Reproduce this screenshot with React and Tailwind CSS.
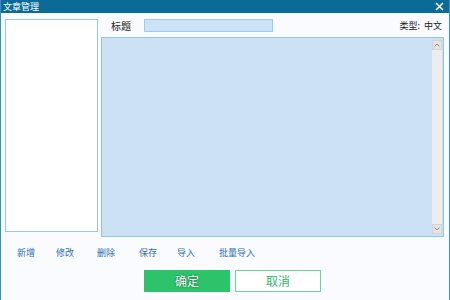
import React from 'react';

const links = [
  { label: '新增', x: 'w-[39px]' },
  { label: '修改', x: 'w-[41px]' },
  { label: '删除', x: 'w-[42px]' },
  { label: '保存', x: 'w-[38px]' },
  { label: '导入', x: 'w-[42px]' },
  { label: '批量导入', x: '' },
];

const App = () => {
  return (
    <div className="w-[450px] h-[300px] flex flex-col bg-[#f9fbfe] border-x border-[#3b8fbf] overflow-hidden" style={{ fontFamily: '"Noto Sans CJK SC", "Noto Sans", sans-serif' }}>
      {/* title bar */}
      <div className="h-[13px] bg-[#0b6b97] flex items-center justify-between pl-[3px] pr-[4px] shrink-0 -mx-px">
        <span className="text-[9px] leading-none text-white">文章管理</span>
        <svg width="9" height="9" viewBox="0 0 9 9" className="mr-[2px]">
          <path d="M1 1L8 8M8 1L1 8" stroke="white" strokeWidth="1.6" />
        </svg>
      </div>

      <div className="flex pl-[4px] pt-[6px] h-[225px] shrink-0">
        {/* list */}
        <div className="w-[93px] h-[213px] bg-white border border-[#95c9ea]" />

        <div className="ml-[3px] flex-1 flex flex-col pr-[5px]">
          <div className="flex items-center h-[13px]">
            <span className="ml-[10px] text-[10px] leading-none text-[#222]">标题</span>
            <div className="ml-[13px] w-[129px] h-[13px] bg-[#cde3f5] border border-[#9ccdee]" />
            <span className="ml-auto mr-[2px] text-[9px] leading-none text-[#222]">类型:&nbsp;&nbsp;中文</span>
          </div>

          <div className="mt-[5px] h-[200px] bg-[#cce2f4] border border-[#8ec5ea] flex justify-end pr-[1px] py-[2px]">
            <div className="w-[10px] bg-[#ededed] flex flex-col justify-between items-center">
              <div className="w-[10px] h-[10px] bg-[#e4e4e4] border border-[#d4d4d4] flex items-center justify-center">
                <svg width="6" height="4" viewBox="0 0 6 4"><path d="M0.5 3.5L3 1L5.5 3.5" stroke="#888" fill="none" strokeWidth="1" /></svg>
              </div>
              <div className="w-[10px] h-[10px] bg-[#e4e4e4] border border-[#d4d4d4] flex items-center justify-center">
                <svg width="6" height="4" viewBox="0 0 6 4"><path d="M0.5 0.5L3 3L5.5 0.5" stroke="#888" fill="none" strokeWidth="1" /></svg>
              </div>
            </div>
          </div>
        </div>
      </div>

      {/* links */}
      <div className="flex items-center pl-[16px] mt-[9px] h-[10px]">
        {links.map((l) => (
          <span key={l.label} className={`${l.x} text-[9px] leading-none text-[#2f6fb5]`}>{l.label}</span>
        ))}
      </div>

      {/* buttons */}
      <div className="flex pl-[143px] mt-[13px] gap-[5px]">
        <button className="w-[86px] h-[22px] bg-[#2cc36b] text-white text-[12px] leading-none flex items-center justify-center [text-shadow:0_0_2px_rgba(0,0,0,0.6)]">确定</button>
        <button className="w-[86px] h-[22px] bg-white border border-[#6fd49a] text-[#2cb866] text-[12px] leading-none flex items-center justify-center">取消</button>
      </div>
    </div>
  );
};

export default App;
